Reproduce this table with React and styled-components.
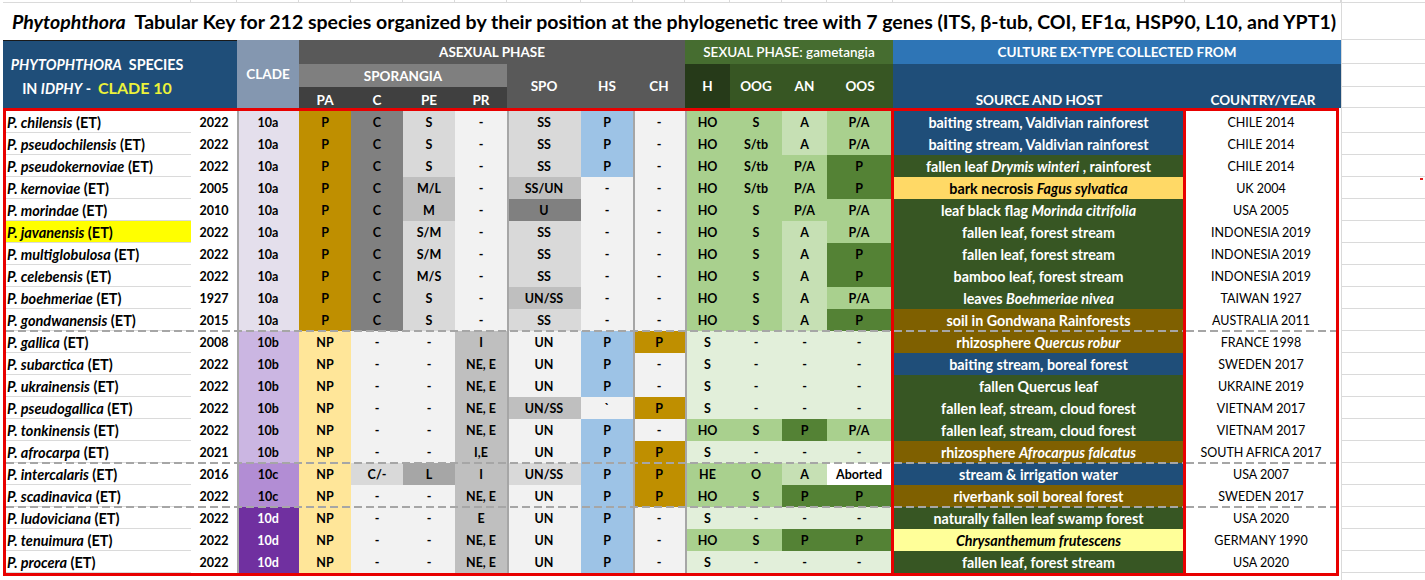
import React from 'react'
import styled, { createGlobalStyle } from 'styled-components'

const GlobalStyle = createGlobalStyle`
  body {
    margin: 0;
    background: #ffffff;
    font-family: Lato, "Liberation Sans", sans-serif;
  }
`

const HEAD_COLS = '188px 46px 62px 52px 52px 52px 52px 74px 52px 52px 45px 52px 45px 66px 292px 156px'
const LEFT_COLS = '185px 46px 62px 52px 52px 52px 52px 74px 52px 52px 45px 52px 45px 64px'
const RED = '#e80000'
const GRID = '#dadada'

const fills = {
  gold: '#bf8f00',
  ny: '#ffe699',
  g50: '#808080',
  g35: '#a6a6a6',
  g25: '#bfbfbf',
  g15: '#d9d9d9',
  g05: '#f2f2f2',
  blue: '#9dc3e6',
  gr0: '#e2efda',
  gr1: '#a9d08e',
  gr2: '#c6e0b4',
  gr3: '#548235',
  white: '#ffffff',
}

const sourceFills = {
  blue: ['#1f4e79', '#ffffff'],
  green: ['#375623', '#ffffff'],
  brown: ['#7f6000', '#ffffff'],
  yellow: ['#ffd966', '#000000'],
  pale: ['#ffff99', '#000000'],
}

const cladeFills = {
  '10a': ['#e4dfec', '#000000'],
  '10b': ['#cbb6e2', '#000000'],
  '10c': ['#b28dd4', '#000000'],
  '10d': ['#7030a0', '#ffffff'],
}

// column index of cells that carry a grey left rule (SPO, CH, H)
const ruled = [4, 6, 7]

const rows = [
  ['chilensis', '2022', '10a', 'P:gold|C:g50|S:g15|-:g05|SS:g15|P:blue|-:g05|HO:gr1|S:gr1|A:gr2|P/A:gr1', 'blue', 'baiting stream, Valdivian rainforest', 'CHILE 2014'],
  ['pseudochilensis', '2022', '10a', 'P:gold|C:g50|S:g15|-:g05|SS:g15|P:blue|-:g05|HO:gr1|S/tb:gr1|A:gr2|P/A:gr1', 'blue', 'baiting stream, Valdivian rainforest', 'CHILE 2014'],
  ['pseudokernoviae', '2022', '10a', 'P:gold|C:g50|S:g15|-:g05|SS:g15|P:blue|-:g05|HO:gr1|S/tb:gr1|P/A:gr1|P:gr3', 'green', 'fallen leaf _Drymis winteri_ , rainforest', 'CHILE 2014'],
  ['kernoviae', '2005', '10a', 'P:gold|C:g50|M/L:g25|-:g05|SS/UN:g25|-:g05|-:g05|HO:gr1|S/tb:gr1|P/A:gr1|P:gr3', 'yellow', 'bark necrosis _Fagus sylvatica_', 'UK 2004'],
  ['morindae', '2010', '10a', 'P:gold|C:g50|M:g25|-:g05|U:g50|-:g05|-:g05|HO:gr1|S:gr1|P/A:gr1|P/A:gr1', 'green', 'leaf black flag _Morinda citrifolia_', 'USA 2005'],
  ['javanensis', '2022', '10a', 'P:gold|C:g50|S/M:g15|-:g05|SS:g15|-:g05|-:g05|HO:gr1|S:gr1|A:gr2|P/A:gr1', 'green', 'fallen leaf, forest stream', 'INDONESIA 2019', 'mark'],
  ['multiglobulosa', '2022', '10a', 'P:gold|C:g50|S/M:g15|-:g05|SS:g15|-:g05|-:g05|HO:gr1|S:gr1|A:gr2|P:gr3', 'green', 'fallen leaf, forest stream', 'INDONESIA 2019'],
  ['celebensis', '2022', '10a', 'P:gold|C:g50|M/S:g15|-:g05|SS:g15|-:g05|-:g05|HO:gr1|S:gr1|A:gr2|P:gr3', 'green', 'bamboo leaf, forest stream', 'INDONESIA 2019'],
  ['boehmeriae', '1927', '10a', 'P:gold|C:g50|S:g15|-:g05|UN/SS:g25|-:g05|-:g05|HO:gr1|S:gr1|A:gr2|P/A:gr1', 'green', 'leaves _Boehmeriae nivea_', 'TAIWAN 1927'],
  ['gondwanensis', '2015', '10a', 'P:gold|C:g50|S:g15|-:g05|SS:g15|-:g05|-:g05|HO:gr1|S:gr1|A:gr2|P:gr3', 'brown', 'soil in Gondwana Rainforests', 'AUSTRALIA 2011', 'end'],
  ['gallica', '2008', '10b', 'NP:ny|-:g05|-:g05|I:g25|UN:g05|P:blue|P:gold|S:gr0|-:gr0|-:gr0|-:gr0', 'brown', 'rhizosphere _Quercus robur_', 'FRANCE 1998'],
  ['subarctica', '2022', '10b', 'NP:ny|-:g05|-:g05|NE, E:g25|UN:g05|P:blue|-:g05|S:gr0|-:gr0|-:gr0|-:gr0', 'blue', 'baiting stream, boreal forest', 'SWEDEN 2017'],
  ['ukrainensis', '2022', '10b', 'NP:ny|-:g05|-:g05|NE, E:g25|UN:g05|P:blue|-:g05|S:gr0|-:gr0|-:gr0|-:gr0', 'green', 'fallen Quercus leaf', 'UKRAINE 2019'],
  ['pseudogallica', '2022', '10b', 'NP:ny|-:g05|-:g05|NE, E:g25|UN/SS:g25|`:g05|P:gold|S:gr0|-:gr0|-:gr0|-:gr0', 'green', 'fallen leaf, stream, cloud forest', 'VIETNAM 2017'],
  ['tonkinensis', '2022', '10b', 'NP:ny|-:g05|-:g05|NE, E:g25|UN:g05|P:blue|-:g05|HO:gr1|S:gr1|P:gr3|P/A:gr1', 'green', 'fallen leaf, stream, cloud forest', 'VIETNAM 2017'],
  ['afrocarpa', '2021', '10b', 'NP:ny|-:g05|-:g05|I,E:g25|UN:g05|P:blue|P:gold|S:gr0|-:gr0|-:gr0|-:gr0', 'brown', 'rhizosphere _Afrocarpus falcatus_', 'SOUTH AFRICA 2017', 'end'],
  ['intercalaris', '2016', '10c', 'NP:ny|C/-:g15|L:g35|I:g25|UN/SS:g15|P:blue|P:gold|HE:gr1|O:gr1|A:gr2|Aborted:white', 'blue', 'stream & irrigation water', 'USA 2007'],
  ['scadinavica', '2022', '10c', 'NP:ny|-:g05|-:g05|NE, E:g25|UN:g05|P:blue|P:gold|HO:gr1|S:gr1|P:gr3|P:gr3', 'brown', 'riverbank soil boreal forest', 'SWEDEN 2017', 'end'],
  ['ludoviciana', '2022', '10d', 'NP:ny|-:g05|-:g05|E:g25|UN:g05|P:blue|-:g05|S:gr0|-:gr0|-:gr0|-:gr0', 'green', 'naturally fallen leaf swamp forest', 'USA 2020'],
  ['tenuimura', '2022', '10d', 'NP:ny|-:g05|-:g05|NE, E:g25|UN:g05|P:blue|-:g05|HO:gr1|S:gr1|P:gr3|P:gr3', 'pale', '_Chrysanthemum frutescens_', 'GERMANY 1990'],
  ['procera', '2022', '10d', 'NP:ny|-:g05|-:g05|NE, E:g25|UN:g05|P:blue|-:g05|S:gr0|-:gr0|-:gr0|-:gr0', 'green', 'fallen leaf, forest stream', 'USA 2020'],
].map(([name, year, clade, cells, fill, source, country, flag]) => ({
  name,
  year,
  clade,
  cells: cells.split('|').map(s => {
    const i = s.lastIndexOf(':')
    return { t: s.slice(0, i), k: s.slice(i + 1) }
  }),
  fill,
  source,
  country,
  highlight: flag === 'mark',
  groupEnd: flag === 'end',
}))

const Page = styled.div`
  display: flex;
  width: 1425px;
  height: 580px;
  overflow: hidden;
`
const Sheet = styled.div`
  display: flex;
  flex-direction: column;
  width: 1341px;
  flex-shrink: 0;
`
const TopStrip = styled.div`
  display: grid;
  grid-template-columns: ${HEAD_COLS};
  height: 2px;
  margin-left: 3px;
  border-bottom: 1px solid ${GRID};

  span {
    border-right: 1px solid ${GRID};
  }
`
const Title = styled.h1`
  margin: 0;
  height: 37px;
  display: flex;
  align-items: center;
  padding-left: 12px;
  font-size: 19.5px;
  font-weight: 700;
  color: #000000;
  white-space: pre;

  em {
    font-style: italic;
  }
`
const Header = styled.div`
  display: grid;
  grid-template-columns: ${HEAD_COLS};
  grid-template-rows: 24px 23px 21px;
  margin-left: 3px;
`
const HeadCell = styled.div`
  grid-column: ${p => p.$col};
  grid-row: ${p => p.$row};
  background: ${p => p.$bg};
  color: #ffffff;
  display: flex;
  align-items: ${p => (p.$bottom ? 'flex-end' : 'center')};
  justify-content: center;
  font-size: 13.5px;
  font-weight: ${p => (p.$light ? 600 : 700)};
  white-space: pre;
`
const SpeciesHead = styled(HeadCell)`
  flex-direction: column;
  align-items: center;
  justify-content: center;
  gap: 5px;
  padding: 4px 46px 0 0;
  border-top: 1px solid #1a1a1a;
  box-sizing: border-box;
  font-size: 14.3px;
`
const HeadLine = styled.div`
  display: flex;
  align-items: baseline;
  white-space: pre;
`
const CladeTen = styled.span`
  color: #ecf23a;
  font-size: 16px;
`
const Body = styled.div`
  display: flex;
  margin-left: 3px;
  border: 3px solid ${RED};
  width: max-content;
`
const Panel = styled.div`
  display: flex;
  flex-direction: column;
  border-left: ${p => (p.$ruled ? `3px solid ${RED}` : 'none')};
`
const Row = styled.div`
  display: grid;
  grid-template-columns: ${LEFT_COLS};
  height: 22px;
  position: relative;

  &::after {
    content: '';
    display: ${p => (p.$groupEnd ? 'block' : 'none')};
    position: absolute;
    left: 0;
    right: 0;
    bottom: -1px;
    height: 2px;
    background: repeating-linear-gradient(90deg, #a6a6a6 0 8px, transparent 8px 12px);
    z-index: 1;
  }
`
const SideRow = styled(Row)`
  display: flex;
  width: ${p => p.$width}px;
  align-items: center;
  justify-content: center;
  background: ${p => p.$bg || '#ffffff'};
  color: ${p => p.$fg || '#000000'};
  font-size: ${p => (p.$regular ? 12.5 : 14.3)}px;
  font-weight: ${p => (p.$regular ? 400 : 700)};
  white-space: pre;
`
const Cell = styled.div`
  display: flex;
  align-items: center;
  justify-content: center;
  background: ${p => p.$bg || '#ffffff'};
  color: ${p => p.$fg || '#000000'};
  font-size: 12.5px;
  font-weight: 700;
  white-space: pre;
  box-shadow: ${p => (p.$rule ? 'inset 2px 0 0 #a6a6a6' : 'none')};
`
const NameCell = styled(Cell)`
  justify-content: flex-start;
  padding-left: 1px;
  font-size: 14.5px;
  background: ${p => (p.$highlight ? '#ffff00' : '#ffffff')};
  box-shadow: inset 0 -1px 0 ${GRID};
`
const Margin = styled.div`
  flex: 1;
  display: flex;
  flex-direction: column;
  border-left: 1px solid ${GRID};
  position: relative;
`
const MarginCell = styled.div`
  height: ${p => p.$h}px;
  flex-shrink: 0;
  border-bottom: 1px solid ${GRID};
  box-sizing: border-box;
`
const Tick = styled.div`
  position: absolute;
  right: 2px;
  top: 178px;
  width: 3px;
  height: 2px;
  background: #e02020;
`

const Source = ({ text }) =>
  text.split('_').map((part, i) => (i % 2 ? <i key={i}>{part}</i> : <span key={i}>{part}</span>))

const marginHeights = [3, 37, 24, 23, 21, 25, ...Array(20).fill(22), 30]

function App() {
  return (
    <Page>
      <GlobalStyle />
      <Sheet>
        <TopStrip>
          {Array.from({ length: 16 }, (_, i) => (
            <span key={i} />
          ))}
        </TopStrip>
        <Title>
          <em>Phytophthora</em>
          {'  Tabular Key for 212 species organized by their position at the phylogenetic tree with 7 genes (ITS, β-tub, COI, EF1α, HSP90, L10, and YPT1)'}
        </Title>
        <Header>
          <SpeciesHead $col="1 / 3" $row="1 / 4" $bg="#1f4e79">
            <HeadLine>
              <i>PHYTOPHTHORA</i>
              {'  SPECIES'}
            </HeadLine>
            <HeadLine>
              {'IN '}
              <i>IDPHY</i>
              {' -  '}
              <CladeTen>CLADE 10</CladeTen>
            </HeadLine>
          </SpeciesHead>
          <HeadCell $col="3" $row="1 / 4" $bg="#8497b0">
            CLADE
          </HeadCell>
          <HeadCell $col="4 / 11" $row="1" $bg="#595959">
            ASEXUAL PHASE
          </HeadCell>
          <HeadCell $col="4 / 8" $row="2" $bg="#7f7f7f">
            SPORANGIA
          </HeadCell>
          {['PA', 'C', 'PE', 'PR'].map((t, i) => (
            <HeadCell key={t} $col={4 + i} $row="3" $bg="#404040" $bottom>
              {t}
            </HeadCell>
          ))}
          {['SPO', 'HS', 'CH'].map((t, i) => (
            <HeadCell key={t} $col={8 + i} $row="2 / 4" $bg="#595959">
              {t}
            </HeadCell>
          ))}
          <HeadCell $col="11 / 15" $row="1" $bg="#466d30" $light>
            SEXUAL PHASE: gametangia
          </HeadCell>
          <HeadCell $col="11" $row="2 / 4" $bg="#263a19">
            H
          </HeadCell>
          {['OOG', 'AN', 'OOS'].map((t, i) => (
            <HeadCell key={t} $col={12 + i} $row="2 / 4" $bg="#375623">
              {t}
            </HeadCell>
          ))}
          <HeadCell $col="15 / 17" $row="1" $bg="#2e75b6">
            CULTURE EX-TYPE COLLECTED FROM
          </HeadCell>
          <HeadCell $col="15" $row="2 / 4" $bg="#1f4e79" $bottom>
            SOURCE AND HOST
          </HeadCell>
          <HeadCell $col="16" $row="2 / 4" $bg="#1f4e79" $bottom>
            COUNTRY/YEAR
          </HeadCell>
        </Header>
        <Body>
          <Panel>
            {rows.map(r => {
              const [cladeBg, cladeFg] = cladeFills[r.clade]
              return (
                <Row key={r.name} $groupEnd={r.groupEnd}>
                  <NameCell $highlight={r.highlight}>
                    <i>P. {r.name}</i>
                    {' (ET)'}
                  </NameCell>
                  <Cell>{r.year}</Cell>
                  <Cell $bg={cladeBg} $fg={cladeFg} $rule>
                    {r.clade}
                  </Cell>
                  {r.cells.map((c, i) => (
                    <Cell key={i} $bg={fills[c.k]} $rule={ruled.includes(i)}>
                      {c.t}
                    </Cell>
                  ))}
                </Row>
              )
            })}
          </Panel>
          <Panel $ruled>
            {rows.map(r => (
              <SideRow
                key={r.name}
                $width={289}
                $groupEnd={r.groupEnd}
                $bg={sourceFills[r.fill][0]}
                $fg={sourceFills[r.fill][1]}
              >
                <Source text={r.source} />
              </SideRow>
            ))}
          </Panel>
          <Panel $ruled>
            {rows.map(r => (
              <SideRow key={r.name} $width={150} $groupEnd={r.groupEnd} $regular>
                {r.country}
              </SideRow>
            ))}
          </Panel>
        </Body>
      </Sheet>
      <Margin>
        {marginHeights.map((h, i) => (
          <MarginCell key={i} $h={h} />
        ))}
        <Tick />
      </Margin>
    </Page>
  )
}

export default App
